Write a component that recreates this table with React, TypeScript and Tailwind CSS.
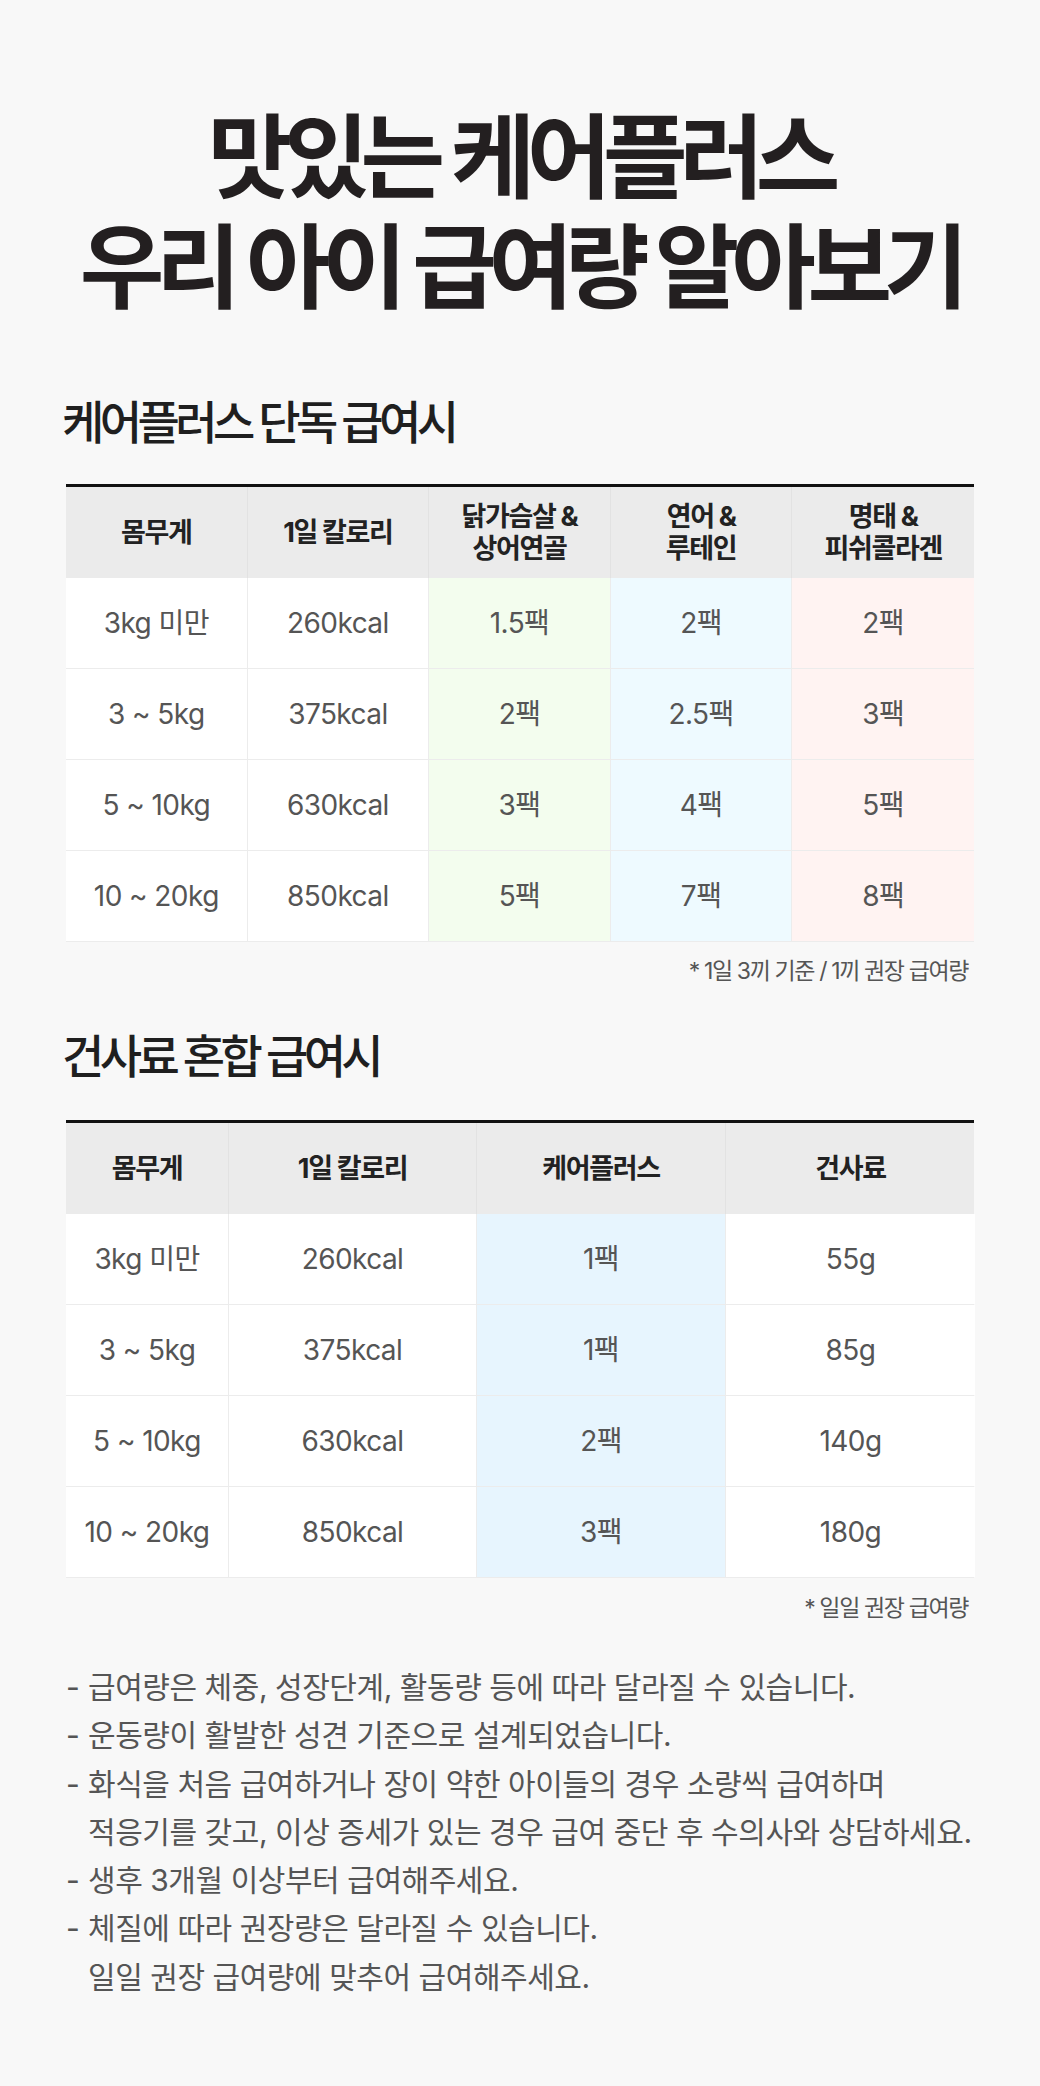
import React from "react";

const h1 = ["몸무게", "1일 칼로리", "닭가슴살 &\n상어연골", "연어 &\n루테인", "명태 &\n피쉬콜라겐"];
const r1 = [
  ["3kg 미만", "260kcal", "1.5팩", "2팩", "2팩"],
  ["3 ~ 5kg", "375kcal", "2팩", "2.5팩", "3팩"],
  ["5 ~ 10kg", "630kcal", "3팩", "4팩", "5팩"],
  ["10 ~ 20kg", "850kcal", "5팩", "7팩", "8팩"],
];
const bg1 = ["bg-white", "bg-white", "bg-[#f3fdee]", "bg-[#eefaff]", "bg-[#fff3f2]"];

const h2 = ["몸무게", "1일 칼로리", "케어플러스", "건사료"];
const r2 = [
  ["3kg 미만", "260kcal", "1팩", "55g"],
  ["3 ~ 5kg", "375kcal", "1팩", "85g"],
  ["5 ~ 10kg", "630kcal", "2팩", "140g"],
  ["10 ~ 20kg", "850kcal", "3팩", "180g"],
];
const bg2 = ["bg-white", "bg-white", "bg-[#e7f5fe]", "bg-white"];

function HeaderCell({ text, last }: { text: string; last: boolean }) {
  return (
    <div
      className={
        "flex items-center justify-center text-center whitespace-pre-line text-[27px] leading-[32px] font-bold tracking-[-0.05em] text-[#222] " +
        (last ? "" : "border-r border-[#e2e2e2]")
      }
    >
      {text}
    </div>
  );
}

function BodyCell({ text, bg, last }: { text: string; bg: string; last: boolean }) {
  return (
    <div
      className={
        "flex items-center justify-center text-[28px] tracking-[-0.02em] text-[#555] " +
        bg +
        " " +
        (last ? "" : "border-r border-[#ececec]")
      }
    >
      {text}
    </div>
  );
}

export default function App() {
  return (
    <div className="min-h-[2086px] w-[1040px] bg-[#f8f8f8] font-['Inter','Noto_Sans_CJK_KR',sans-serif] pb-[85px]">
      <h1 className="pt-[103px] text-center text-[92px] leading-[110px] font-bold tracking-[-0.09em] text-[#231f20]">
        맛있는 케어플러스
        <br />
        우리 아이 급여량 알아보기
      </h1>

      <div className="px-[66px]">
        <h2 className="mt-[73px] -ml-[4px] text-[46px] leading-[53px] font-medium tracking-[-0.1em] text-[#1f1f1f]">
          케어플러스 단독 급여시
        </h2>

        <div className="mt-[35px] border-t-[3px] border-[#111]">
          <div className="grid grid-cols-5 h-[91px] bg-[#ebebeb]">
            {h1.map((t, i) => (
              <HeaderCell key={i} text={t} last={i === h1.length - 1} />
            ))}
          </div>
          {r1.map((row, ri) => (
            <div key={ri} className="grid grid-cols-5 h-[91px] border-b border-[#ececec]">
              {row.map((t, i) => (
                <BodyCell key={i} text={t} bg={bg1[i]} last={i === row.length - 1} />
              ))}
            </div>
          ))}
        </div>

        <p className="mt-[14px] pr-[6px] text-right text-[23px] leading-[30px] tracking-[-0.06em] text-[#555]">
          * 1일 3끼 기준 / 1끼 권장 급여량
        </p>

        <h2 className="mt-[44px] -ml-[4px] text-[46px] leading-[53px] font-medium tracking-[-0.1em] text-[#1f1f1f]">
          건사료 혼합 급여시
        </h2>

        <div className="mt-[37px] border-t-[3px] border-[#111]">
          <div className="grid grid-cols-[163px_248px_249px_249px] h-[91px] bg-[#ebebeb]">
            {h2.map((t, i) => (
              <HeaderCell key={i} text={t} last={i === h2.length - 1} />
            ))}
          </div>
          {r2.map((row, ri) => (
            <div key={ri} className="grid grid-cols-[163px_248px_249px_249px] h-[91px] border-b border-[#ececec]">
              {row.map((t, i) => (
                <BodyCell key={i} text={t} bg={bg2[i]} last={i === row.length - 1} />
              ))}
            </div>
          ))}
        </div>

        <p className="mt-[15px] pr-[6px] text-right text-[23px] leading-[30px] tracking-[-0.06em] text-[#555]">
          * 일일 권장 급여량
        </p>

        <ul className="mt-[40px] text-[30px] leading-[48.3px] tracking-[-0.015em] text-[#555] whitespace-nowrap">
          <li className="flex">
            <span className="w-[22px] shrink-0">-</span>
            <span>급여량은 체중, 성장단계, 활동량 등에 따라 달라질 수 있습니다.</span>
          </li>
          <li className="flex">
            <span className="w-[22px] shrink-0">-</span>
            <span>운동량이 활발한 성견 기준으로 설계되었습니다.</span>
          </li>
          <li className="flex">
            <span className="w-[22px] shrink-0">-</span>
            <span>
              화식을 처음 급여하거나 장이 약한 아이들의 경우 소량씩 급여하며
              <br />
              적응기를 갖고, 이상 증세가 있는 경우 급여 중단 후 수의사와 상담하세요.
            </span>
          </li>
          <li className="flex">
            <span className="w-[22px] shrink-0">-</span>
            <span>생후 3개월 이상부터 급여해주세요.</span>
          </li>
          <li className="flex">
            <span className="w-[22px] shrink-0">-</span>
            <span>
              체질에 따라 권장량은 달라질 수 있습니다.
              <br />
              일일 권장 급여량에 맞추어 급여해주세요.
            </span>
          </li>
        </ul>
      </div>
    </div>
  );
}
